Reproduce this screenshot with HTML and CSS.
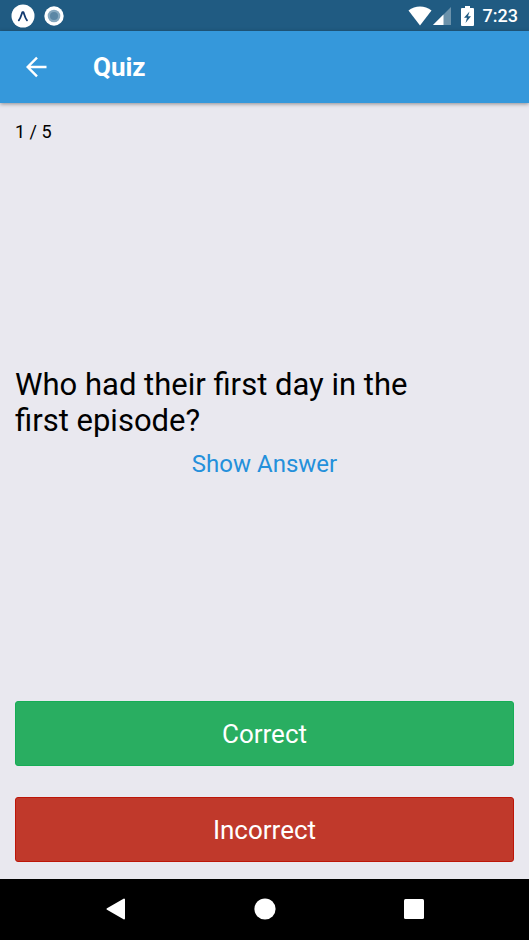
FILE: index.html
```html
<!DOCTYPE html>
<html lang="en">
<head>
<meta charset="utf-8">
<meta name="viewport" content="width=device-width, initial-scale=1">
<title>Quiz</title>
<link rel="stylesheet" href="styles.css">
</head>
<body>
<div class="status-bar">
  <svg class="status-app" width="24" height="24" viewBox="0 0 24 24" aria-hidden="true">
    <circle cx="12" cy="12" r="11.5" fill="#fff"/>
    <path d="M7.8 16.3C9.5 14.4 10.5 10.5 11.3 8.2h1.2C13.3 10.5 14.3 14.4 16 16.3" fill="none" stroke="#123a70" stroke-width="1.8" stroke-linecap="round" stroke-linejoin="round"/>
  </svg>
  <svg class="status-record" width="20" height="20" viewBox="0 0 20 20" aria-hidden="true">
    <circle cx="10" cy="10" r="9.7" fill="#fff"/>
    <circle cx="10" cy="10" r="6.3" fill="#86a8bf"/>
    <circle cx="10" cy="10" r="4" fill="#5b87a5"/>
  </svg>
  <svg class="status-wifi" width="24" height="20" viewBox="0 0 24 20" aria-hidden="true">
    <path d="M.5 4.5C7-.8 17-.8 23.500 4.500L12 19.500z" fill="#fff"/>
  </svg>
  <svg class="status-signal" width="18" height="18" viewBox="0 0 18 18" aria-hidden="true">
    <path d="M0 18L18 0v18z" fill="#6b92ab"/>
    <path d="M0 18L10.500 7.500V18z" fill="#fff"/>
  </svg>
  <svg class="status-battery" width="13" height="20" viewBox="0 0 13 20" aria-hidden="true">
    <path d="M4 0h5v2h3q1 0 1 1v16q0 1-1 1H1q-1 0-1-1V3q0-1 1-1h3z" fill="#fff"/>
    <path d="M8.500 5.500L3 11.800h3L4.500 17 10 10.300H7z" fill="#205b82"/>
  </svg>
  <span class="status-time">7:23</span>
</div>
<header class="app-bar">
  <button class="back" type="button" aria-label="Back">
    <svg width="22" height="22" viewBox="0 0 22 22" aria-hidden="true">
      <path d="M20.500 11H2M11 1.700L1.700 11l9.300 9.300" fill="none" stroke="#fff" stroke-width="2.400"/>
    </svg>
  </button>
  <h1 class="title">Quiz</h1>
</header>
<main class="quiz">
  <p class="progress">1 / 5</p>
  <section class="card">
    <h2 class="question">Who had their first day in the first episode?</h2>
    <button class="show-answer" type="button">Show Answer</button>
  </section>
  <div class="actions">
    <button class="action correct" type="button">Correct</button>
    <button class="action incorrect" type="button">Incorrect</button>
  </div>
</main>
<nav class="nav-bar" aria-label="System">
  <button class="nav-button" type="button" aria-label="Back">
    <svg width="22" height="22" viewBox="0 0 22 22" aria-hidden="true"><path d="M2.500 11L19 1.500v19z" fill="#fff" stroke="#fff" stroke-width="2" stroke-linejoin="round"/></svg>
  </button>
  <button class="nav-button" type="button" aria-label="Home">
    <svg width="22" height="22" viewBox="0 0 22 22" aria-hidden="true"><circle cx="11" cy="11" r="10.600" fill="#fff"/></svg>
  </button>
  <button class="nav-button" type="button" aria-label="Overview">
    <svg width="22" height="22" viewBox="0 0 22 22" aria-hidden="true"><rect x="1" y="1" width="20" height="20" rx="1.500" fill="#fff"/></svg>
  </button>
</nav>
</body>
</html>
```
FILE: styles.css
```css
* {
  box-sizing: border-box;
}

body {
  display: flex;
  flex-direction: column;
  min-height: 100vh;
  margin: 0;
  background: #e9e8ef;
  color: #000;
  font-family: Roboto, "Liberation Sans", sans-serif;
}

h1,
h2,
p {
  margin: 0;
  font-weight: 400;
}

button {
  padding: 0;
  border: 0;
  background: none;
  color: inherit;
  font: inherit;
  cursor: pointer;
}

svg {
  display: block;
  flex: none;
}

.status-bar {
  display: flex;
  align-items: center;
  height: 31px;
  padding: 0 11px;
  background: #205b82;
  color: #fff;
}

.status-record {
  margin-left: 9px;
}

.status-wifi {
  margin-left: auto;
}

.status-signal {
  margin-left: 1px;
}

.status-battery {
  margin: 0 9px 0 10px;
}

.status-time {
  font-size: 18px;
  font-weight: 500;
  line-height: 24px;
}

.app-bar {
  display: flex;
  align-items: center;
  gap: 45px;
  height: 72px;
  padding: 0 26px;
  background: #3598db;
  box-shadow: 0 1px 4px rgba(0, 0, 0, 0.4);
  color: #fff;
}

.title {
  font-size: 26px;
  font-weight: 700;
  line-height: 34px;
}

.quiz {
  display: flex;
  flex: 1;
  flex-direction: column;
  justify-content: space-between;
  padding: 17px 15px;
}

.progress {
  font-size: 18px;
  line-height: 24px;
}

.card {
  display: flex;
  flex-direction: column;
  gap: 10px;
}

.question {
  max-width: 430px;
  font-size: 31px;
  line-height: 36px;
}

.show-answer {
  align-self: center;
  color: #2490db;
  font-size: 24px;
  line-height: 30px;
}

.actions {
  display: flex;
  flex-direction: column;
  gap: 31px;
}

.action {
  padding: 17px 16px 16px;
  border: 1px solid;
  border-radius: 3px;
  color: #fff;
  font-size: 26px;
  line-height: 30px;
}

.correct {
  border-color: #16ad55;
  background: #29ae61;
}

.incorrect {
  border-color: #bd1508;
  background: #c0392b;
}

.nav-bar {
  display: flex;
  justify-content: center;
  gap: 127px;
  height: 61px;
  padding-bottom: 2px;
  background: #000;
}

.nav-button {
  display: flex;
  align-items: center;
}
```
